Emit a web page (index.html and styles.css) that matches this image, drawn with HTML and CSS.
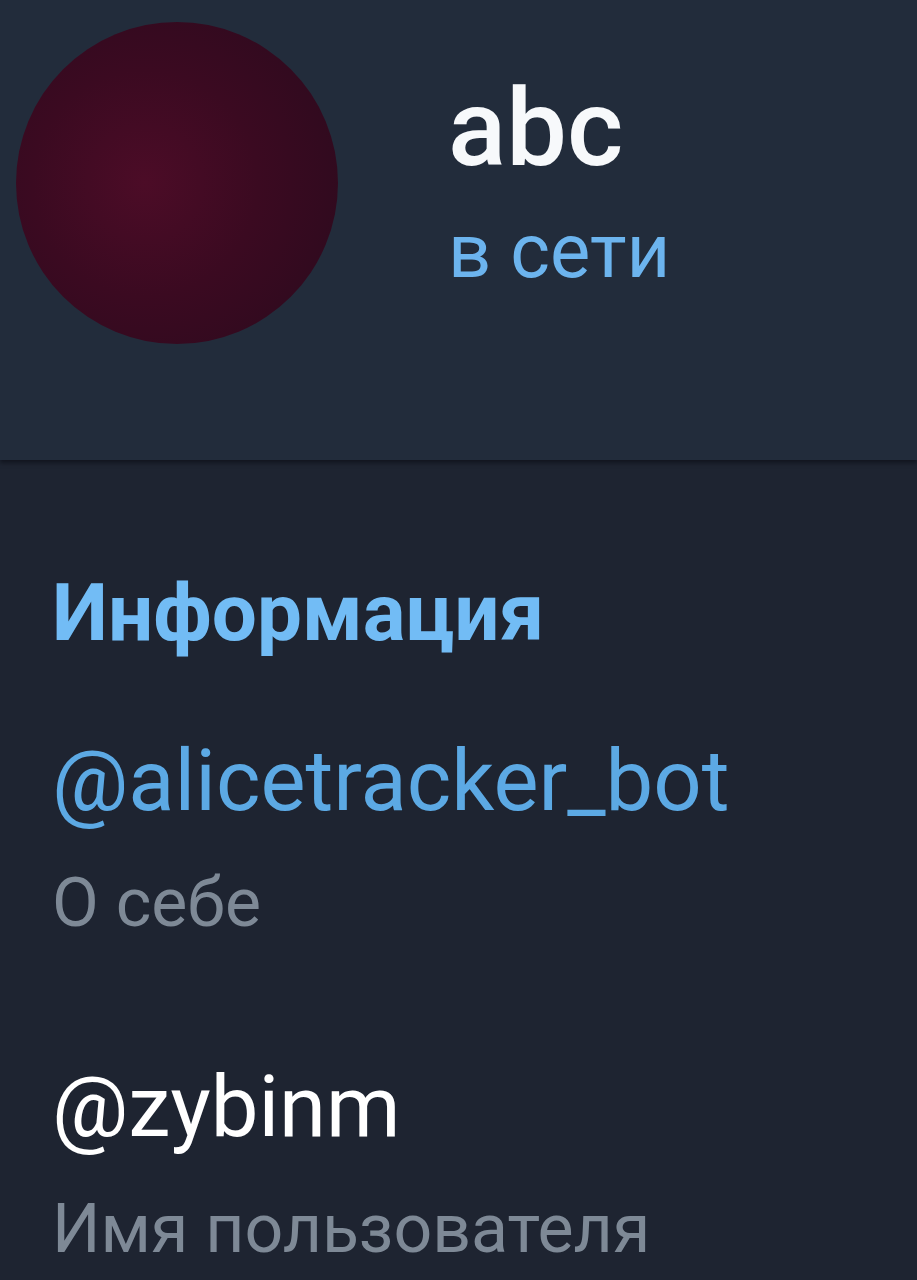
FILE: index.html
```html
<!DOCTYPE html>
<html lang="ru">
<head>
    <meta charset="UTF-8">
    <meta name="viewport" content="width=device-width, initial-scale=1.0">
    <title>abc</title>
    <link rel="stylesheet" href="styles.css">
</head>
<body>
    <header class="profile-header">
        <div class="avatar"></div>
        <div class="profile-title">
            <div class="profile-name">abc</div>
            <div class="profile-status">в сети</div>
        </div>
    </header>

    <!-- Info block -->
    <section class="info">
        <h2 class="info-heading">Информация</h2>

        <div class="info-row">
            <div class="info-value link">@alicetracker_bot</div>
            <div class="info-label">О себе</div>
        </div>

        <div class="info-row">
            <div class="info-value">@zybinm</div>
            <div class="info-label">Имя пользователя</div>
        </div>
    </section>
</body>
</html>
```

FILE: styles.css
```css
* {
    margin: 0;
    padding: 0;
    box-sizing: border-box;
}

body {
    font-family: Roboto, 'Liberation Sans', sans-serif;
    background-color: #1e2431;
    color: #ffffff;
    overflow: hidden;
}

.profile-header {
    height: 460px;
    background-color: #222c3b;
    display: flex;
    align-items: flex-start;
    padding: 22px 0 0 16px;
    box-shadow: 0 3px 4px rgba(10, 12, 20, 0.6);
    position: relative;
}

.avatar {
    width: 322px;
    height: 322px;
    border-radius: 50%;
    flex-shrink: 0;
    background: radial-gradient(circle at 40% 50%, #4c0c27 0%, #3b0a21 45%, #2a0a1d 100%);
}

.profile-title {
    margin-left: 110px;
    padding-top: 42px;
}

.profile-name {
    font-size: 108px;
    font-weight: 500;
    line-height: 1.2;
    color: #f7f9fb;
}

.profile-status {
    font-size: 76px;
    line-height: 1.2;
    margin-top: 12px;
    color: #6cb4ee;
}

.info {
    padding: 105px 0 0 52px;
}

.info-heading {
    font-size: 80px;
    font-weight: 700;
    line-height: 1.2;
    color: #72bcf5;
}

.info-row {
    margin-top: 69px;
}

.info-row + .info-row {
    margin-top: 111px;
}

.info-value {
    font-size: 85px;
    line-height: 1.2;
    color: #ffffff;
}

.info-value.link {
    color: #5ca9e4;
}

.info-label {
    font-size: 68px;
    line-height: 1.2;
    margin-top: 31px;
    color: #7e8996;
}
```
